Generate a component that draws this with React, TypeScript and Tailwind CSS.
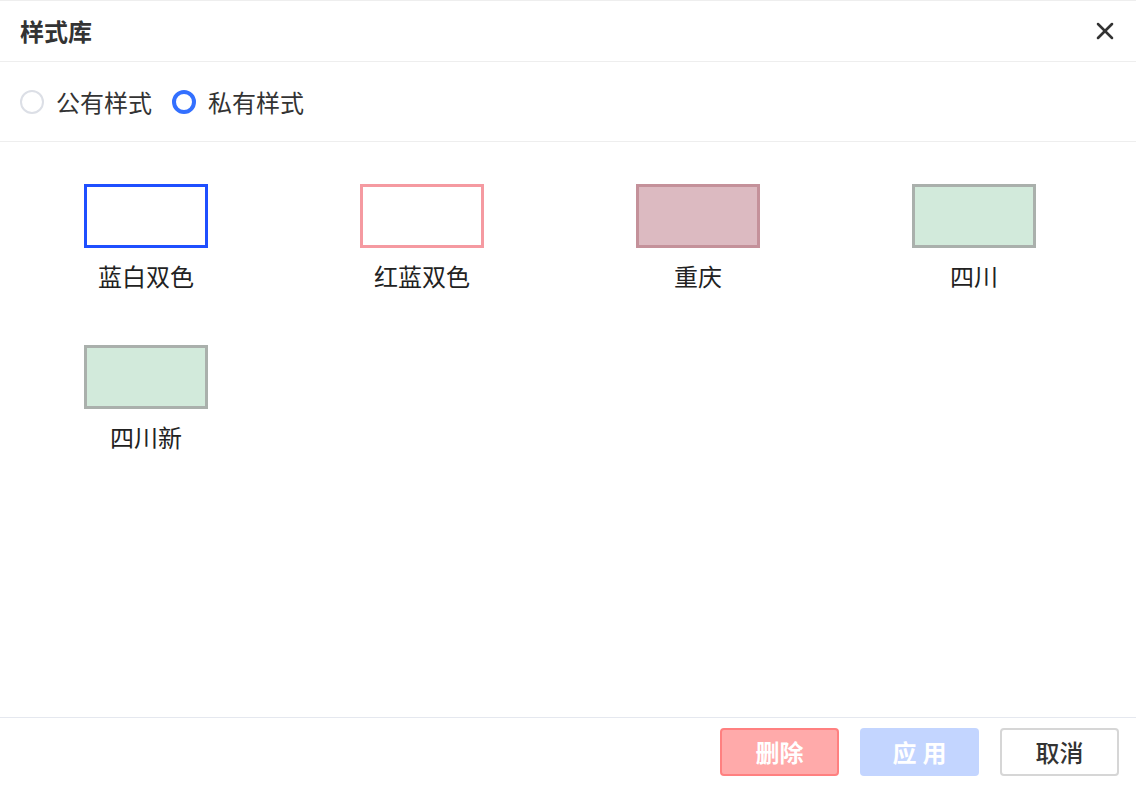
import { X } from "lucide-react";

type Style = {
  name: string;
  box: string;
};

const styles: Style[] = [
  { name: "蓝白双色", box: "border-[3px] border-[#1f4fff] bg-white" },
  { name: "红蓝双色", box: "border-[3px] border-[#f59aa1] bg-white" },
  { name: "重庆", box: "border-[3px] border-[#c4919a] bg-[#dcbac1]" },
  { name: "四川", box: "border-[3px] border-[#aab0ac] bg-[#d2eadb]" },
  { name: "四川新", box: "border-[3px] border-[#aab0ac] bg-[#d2eadb]" },
];

const App = () => {
  return (
    <div
      className="flex h-[786px] w-[1136px] flex-col bg-white text-[#333]"
      style={{ fontFamily: '"Noto Sans CJK SC", "Noto Sans", sans-serif' }}
    >
      <div className="flex h-[62px] items-center justify-between border-y border-[#eeeeee] pl-5 pr-[17px]">
        <span className="text-[24px] font-bold">样式库</span>
        <X className="h-7 w-7 text-[#333]" strokeWidth={2.2} />
      </div>

      <div className="flex h-[80px] items-center border-b border-[#eeeeee] pl-5">
        <label className="flex items-center">
          <span className="h-[24px] w-[24px] rounded-full border-2 border-[#dcdfe6] bg-white" />
          <span className="ml-[12px] text-[24px]">公有样式</span>
        </label>
        <label className="ml-[20px] flex items-center">
          <span className="h-[24px] w-[24px] rounded-full border-[4px] border-[#3370ff] bg-white" />
          <span className="ml-[12px] text-[24px]">私有样式</span>
        </label>
      </div>

      <div className="flex-1 pl-[8px] pt-[42px]">
        <div className="grid grid-cols-[repeat(4,276px)] gap-y-[51px]">
          {styles.map((s) => (
            <div key={s.name} className="flex flex-col items-center">
              <div className={`h-[64px] w-[124px] ${s.box}`} />
              <span className="mt-[10px] text-[24px] leading-[36px] text-[#222]">
                {s.name}
              </span>
            </div>
          ))}
        </div>
      </div>

      <div className="flex h-[69px] items-center justify-end gap-[21px] border-t border-[#e5e8ef] pr-[17px]">
        <button className="h-[48px] w-[119px] rounded-[4px] border-2 border-[#ff8080] bg-[#ffaaaa] text-[24px] font-bold text-white">
          删除
        </button>
        <button className="h-[48px] w-[119px] rounded-[4px] bg-[#c3d5ff] pl-[6px] text-[24px] font-bold tracking-[6px] text-white">
          应用
        </button>
        <button className="h-[48px] w-[119px] rounded-[4px] border-2 border-[#d6d6d6] bg-white text-[24px] font-medium text-[#333]">
          取消
        </button>
      </div>
    </div>
  );
};

export default App;
